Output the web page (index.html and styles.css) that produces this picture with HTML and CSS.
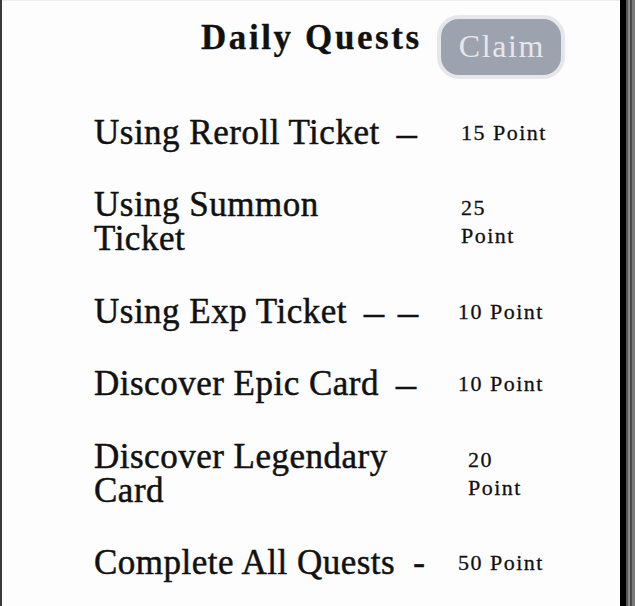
FILE: index.html
```html
<!DOCTYPE html>
<html>
<head>
<meta charset="utf-8">
<link rel="stylesheet" href="styles.css">
</head>
<body>
<div class="frame">
  <div class="panel">
    <div class="header">
      <h1 class="title">Daily Quests</h1>
      <button class="claim">Claim</button>
    </div>
    <div class="list">
      <div class="row">
        <div class="left"><span class="name">Using Reroll Ticket</span><span class="dash">–</span></div>
        <div class="points p1">15 Point</div>
      </div>
      <div class="row">
        <div class="left"><span class="name">Using Summon Ticket</span></div>
        <div class="points p2 stack">25 Point</div>
      </div>
      <div class="row">
        <div class="left"><span class="name">Using Exp Ticket</span><span class="dash wide">– –</span></div>
        <div class="points p3">10 Point</div>
      </div>
      <div class="row">
        <div class="left"><span class="name">Discover Epic Card</span><span class="dash">–</span></div>
        <div class="points p3">10 Point</div>
      </div>
      <div class="row">
        <div class="left"><span class="name">Discover Legendary Card</span></div>
        <div class="points p5 stack">20 Point</div>
      </div>
      <div class="row">
        <div class="left"><span class="name">Complete All Quests</span><span class="dash hyphen">-</span></div>
        <div class="points p6">50 Point</div>
      </div>
    </div>
  </div>
  <div class="edge-dark"></div>
  <div class="edge-grey"></div>
</div>
</body>
</html>
```

FILE: styles.css
```css
html, body {
  margin: 0;
  padding: 0;
}
body {
  font-family: "Liberation Serif", "Times New Roman", serif;
  color: #111;
  background: #fdfdfd;
}
.frame {
  display: flex;
  height: 606px;
  overflow: hidden;
}
.panel {
  flex: 1;
  border-left: 2px solid #3a3a3a;
  background: #fdfdfd;
  box-shadow: inset 0 1px 0 #ececec;
}
.edge-dark {
  width: 6px;
  background: #000;
}
.edge-grey {
  width: 9px;
  background: linear-gradient(to right, #555 0, #555 2px, #888 2px, #888 4px, #4a4a4a 4px, #4a4a4a 6px, #7a7a7a 6px);
}
.header {
  display: flex;
  justify-content: flex-end;
  align-items: flex-start;
  gap: 15px;
  padding: 15px 55px 0 0;
}
.title {
  margin: 3px 0 0 0;
  font-size: 35px;
  line-height: 40px;
  font-weight: bold;
  letter-spacing: 2.6px;
  -webkit-text-stroke: 0.3px #111;
}
.claim {
  box-sizing: border-box;
  height: 64px;
  padding: 0 16px 3px 18px;
  border: 4px solid #e5e7eb;
  border-radius: 22px;
  background: #9ca3af;
  color: #e5e7eb;
  font-family: "Liberation Serif", "Times New Roman", serif;
  font-size: 32px;
  line-height: 32px;
  letter-spacing: 1.6px;
}
.list {
  display: flex;
  flex-direction: column;
  gap: 38.4px;
  padding: 37px 0 0 92px;
}
.row {
  display: flex;
  align-items: center;
}
.left {
  width: 364px;
  display: flex;
  align-items: center;
}
.name {
  max-width: 310px;
  font-size: 35px;
  line-height: 34px;
  letter-spacing: 0.5px;
  -webkit-text-stroke: 0.5px #111;
}
.dash {
  margin-left: 17px;
  font-size: 40px;
  line-height: 34px;
  white-space: pre;
  -webkit-text-stroke: 0.6px #111;
}
.dash.wide {
  letter-spacing: 2px;
}
.dash.hyphen {
  font-size: 35px;
  margin-left: 18px;
}
.points {
  font-size: 22px;
  line-height: 28px;
  letter-spacing: 1.5px;
  white-space: nowrap;
  -webkit-text-stroke: 0.3px #111;
}
.points.stack {
  white-space: normal;
  width: 70px;
}
.p1 { padding-left: 3px; }
.p2 { padding-left: 3px; }
.p3 { padding-left: 0; }
.p5 { padding-left: 10px; }
.p6 { padding-left: 0; }
```
